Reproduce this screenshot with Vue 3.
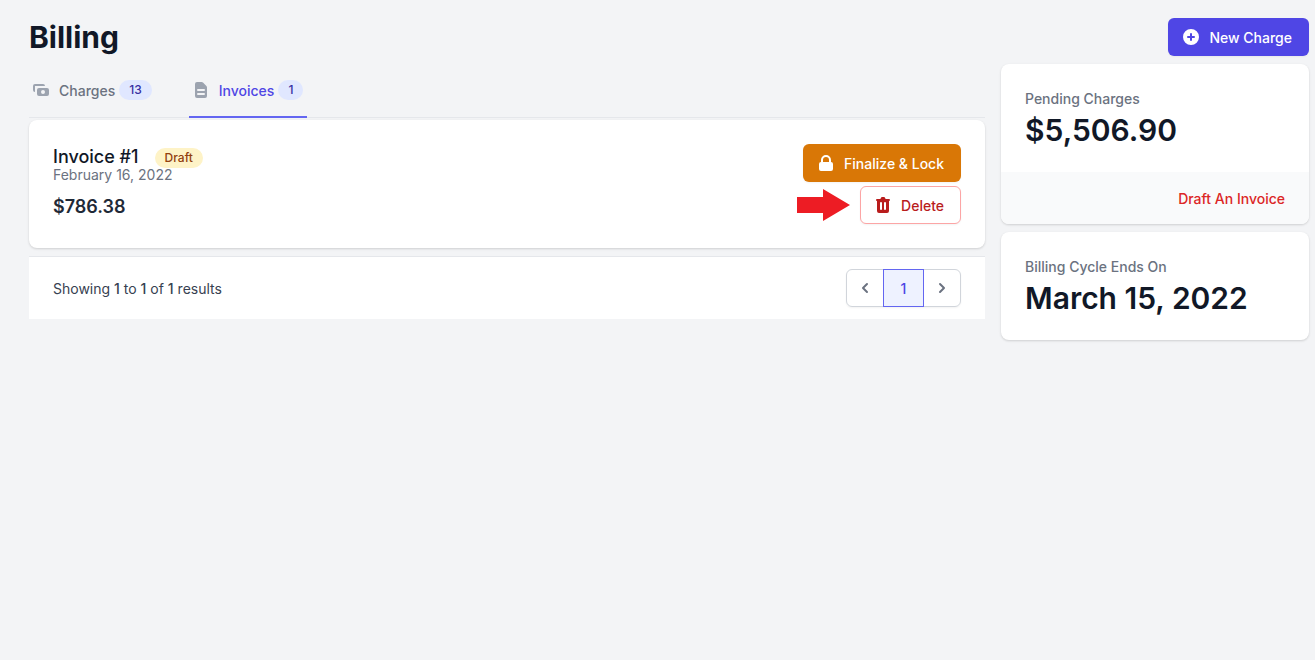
<script setup>
const tabs = [
  {
    name: 'Charges',
    count: 13,
    active: false,
    icon: 'M4 4a2 2 0 00-2 2v4a2 2 0 002 2V6h10a2 2 0 00-2-2H4zm2 6a2 2 0 012-2h8a2 2 0 012 2v4a2 2 0 01-2 2H8a2 2 0 01-2-2v-4zm6 4a2 2 0 100-4 2 2 0 000 4z',
  },
  {
    name: 'Invoices',
    count: 1,
    active: true,
    icon: 'M4 4a2 2 0 012-2h4.586A2 2 0 0112 2.586L15.414 6A2 2 0 0116 7.414V16a2 2 0 01-2 2H6a2 2 0 01-2-2V4zm2 6a1 1 0 011-1h6a1 1 0 110 2H7a1 1 0 01-1-1zm1 3a1 1 0 100 2h6a1 1 0 100-2H7z',
  },
]
</script>

<template>
  <div class="page">
    <main class="main">
      <h1 class="heading">Billing</h1>
      <nav class="tabs" aria-label="Billing sections">
        <a
          v-for="tab in tabs"
          :key="tab.name"
          href="#"
          class="tab"
          :class="{ active: tab.active }"
          :aria-current="tab.active ? 'page' : undefined"
        >
          <svg class="icon" viewBox="0 0 20 20" aria-hidden="true">
            <path fill-rule="evenodd" clip-rule="evenodd" :d="tab.icon" />
          </svg>
          <span>{{ tab.name }}</span>
          <span class="badge count">{{ tab.count }}</span>
        </a>
      </nav>

      <article class="card invoice">
        <div class="details">
          <div class="title-row">
            <h2 class="title">Invoice #1</h2>
            <span class="badge draft">Draft</span>
          </div>
          <p class="date">February 16, 2022</p>
          <p class="amount">$786.38</p>
        </div>
        <div class="actions">
          <button type="button" class="btn finalize">
            <svg class="icon" viewBox="0 0 20 20" aria-hidden="true">
              <path fill-rule="evenodd" clip-rule="evenodd" d="M5 9V7a5 5 0 0110 0v2a2 2 0 012 2v5a2 2 0 01-2 2H5a2 2 0 01-2-2v-5a2 2 0 012-2zm8-2v2H7V7a3 3 0 016 0z" />
            </svg>
            Finalize &amp; Lock
          </button>
          <div class="delete-row">
            <svg class="arrow" viewBox="0 0 53 32" aria-hidden="true">
              <path d="M0 8h26V0l27 16-27 16v-8H0z" />
            </svg>
            <button type="button" class="btn delete">
              <svg class="icon" viewBox="0 0 20 20" aria-hidden="true">
                <path fill-rule="evenodd" clip-rule="evenodd" d="M9 2a1 1 0 00-.894.553L7.382 4H4a1 1 0 000 2v10a2 2 0 002 2h8a2 2 0 002-2V6a1 1 0 100-2h-3.382l-.724-1.447A1 1 0 0011 2H9zM7 8a1 1 0 012 0v6a1 1 0 11-2 0V8zm5-1a1 1 0 00-1 1v6a1 1 0 102 0V8a1 1 0 00-1-1z" />
              </svg>
              Delete
            </button>
          </div>
        </div>
      </article>

      <div class="pagination">
        <p class="results">Showing <b>1</b> to <b>1</b> of <b>1</b> results</p>
        <nav class="pager" aria-label="Pagination">
          <button type="button" class="page-btn" aria-label="Previous">
            <svg class="icon" viewBox="0 0 20 20" aria-hidden="true">
              <path fill-rule="evenodd" clip-rule="evenodd" d="M12.707 5.293a1 1 0 010 1.414L9.414 10l3.293 3.293a1 1 0 01-1.414 1.414l-4-4a1 1 0 010-1.414l4-4a1 1 0 011.414 0z" />
            </svg>
          </button>
          <button type="button" class="page-btn current" aria-current="page">1</button>
          <button type="button" class="page-btn" aria-label="Next">
            <svg class="icon" viewBox="0 0 20 20" aria-hidden="true">
              <path fill-rule="evenodd" clip-rule="evenodd" d="M7.293 14.707a1 1 0 010-1.414L10.586 10 7.293 6.707a1 1 0 011.414-1.414l4 4a1 1 0 010 1.414l-4 4a1 1 0 01-1.414 0z" />
            </svg>
          </button>
        </nav>
      </div>
    </main>

    <aside class="side">
      <button type="button" class="btn new-charge">
        <svg class="icon" viewBox="0 0 20 20" aria-hidden="true">
          <path fill-rule="evenodd" clip-rule="evenodd" d="M10 18a8 8 0 100-16 8 8 0 000 16zm1-11a1 1 0 10-2 0v2H7a1 1 0 100 2h2v2a1 1 0 102 0v-2h2a1 1 0 100-2h-2V7z" />
        </svg>
        New Charge
      </button>
      <section class="card stat">
        <div class="stat-body">
          <h2 class="stat-label">Pending Charges</h2>
          <p class="stat-value">$5,506.90</p>
        </div>
        <div class="stat-footer"><a href="#">Draft An Invoice</a></div>
      </section>
      <section class="card stat">
        <div class="stat-body">
          <h2 class="stat-label">Billing Cycle Ends On</h2>
          <p class="stat-value">March 15, 2022</p>
        </div>
      </section>
    </aside>
  </div>
</template>

<style>
body {
  background: #f3f4f6;
}
</style>

<style scoped>
.page,
.page * {
  box-sizing: border-box;
}

.page {
  display: grid;
  grid-template-columns: repeat(4, minmax(0, 1fr));
  gap: 16px;
  align-items: start;
  padding: 18px 6px 24px 29px;
  font-family: Inter, "Liberation Sans", sans-serif;
  font-size: 14px;
  line-height: 21px;
  color: #111827;
}

h1,
h2,
p {
  margin: 0;
}

a {
  text-decoration: none;
}

button {
  font: inherit;
  cursor: pointer;
}

.main {
  grid-column: span 3;
}

.heading {
  font-size: 30px;
  line-height: 38px;
  font-weight: 700;
}

.icon {
  flex: none;
  width: 20px;
  height: 20px;
  fill: currentColor;
}

.tabs {
  display: flex;
  gap: 33px;
  margin-top: 8px;
  box-shadow: inset 0 -1px #e5e7eb;
}

.tab {
  display: flex;
  align-items: flex-start;
  padding: 16px 4px 15px;
  border-bottom: 2px solid transparent;
  font-weight: 500;
  color: #6b7280;
}

.tab .icon {
  margin: 0 8px 0 -2px;
  color: #9ca3af;
}

.tab.active {
  border-color: #6366f1;
  color: #4f46e5;
}

.badge {
  padding: 2px 10px;
  border-radius: 10px;
  font-size: 12px;
  line-height: 16px;
  font-weight: 500;
}

.count {
  margin-left: 4px;
  background: #e0e7ff;
  color: #3730a3;
}

.draft {
  margin-top: 4px;
  background: #fef3c7;
  color: #92400e;
}

.card {
  overflow: hidden;
  border-radius: 8px;
  background: #fff;
  box-shadow: 0 1px 3px rgba(0, 0, 0, 0.1), 0 1px 2px rgba(0, 0, 0, 0.06);
}

.invoice {
  display: flex;
  justify-content: space-between;
  margin-top: 2px;
  padding: 24px;
}

.title-row {
  display: flex;
  align-items: flex-start;
  gap: 16px;
}

.title {
  font-size: 18px;
  line-height: 25px;
  font-weight: 500;
}

.date {
  line-height: 12px;
  color: #6b7280;
}

.amount {
  margin-top: 14px;
  font-size: 18px;
  line-height: 24px;
  font-weight: 600;
  color: #1f2937;
}

.actions {
  display: flex;
  flex-direction: column;
  align-items: flex-end;
  gap: 4px;
}

.btn {
  display: inline-flex;
  align-items: flex-start;
  gap: 8px;
  padding: 8px 16px 7px 12px;
  border: 1px solid transparent;
  border-radius: 6px;
  font-weight: 500;
  color: #fff;
  box-shadow: 0 1px 2px rgba(0, 0, 0, 0.05);
}

.finalize {
  background: #d97706;
}

.delete {
  border-color: #fca5a5;
  background: #fff;
  color: #b91c1c;
}

.delete-row {
  display: flex;
  align-items: center;
  gap: 10px;
}

.arrow {
  width: 53px;
  height: 32px;
  fill: #ed1c24;
}

.pagination {
  display: flex;
  align-items: flex-start;
  justify-content: space-between;
  margin-top: 8px;
  padding: 12px 24px;
  border-top: 1px solid #e5e7eb;
  background: #fff;
}

.results {
  padding-top: 9px;
  color: #374151;
}

.results b {
  font-weight: 500;
}

.pager {
  display: flex;
  border-radius: 6px;
  box-shadow: 0 1px 2px rgba(0, 0, 0, 0.05);
}

.page-btn {
  display: flex;
  align-items: flex-start;
  justify-content: center;
  padding: 8px;
  border: 1px solid #d1d5db;
  background: #fff;
  font-weight: 500;
  color: #6b7280;
}

.page-btn:first-child {
  border-radius: 6px 0 0 6px;
}

.page-btn:last-child {
  border-radius: 0 6px 6px 0;
}

.page-btn.current {
  z-index: 1;
  min-width: 41px;
  margin: 0 -1px;
  padding: 8px 12px 7px;
  border-color: #6366f1;
  background: #eef2ff;
  color: #4f46e5;
}

.side {
  display: flex;
  flex-direction: column;
  gap: 8px;
}

.new-charge {
  align-self: flex-end;
  background: #4f46e5;
}

.stat-body {
  padding: 24px;
}

.stat-label {
  font-size: 14px;
  font-weight: 500;
  color: #6b7280;
}

.stat-value {
  margin-top: 3px;
  font-size: 30px;
  line-height: 36px;
  font-weight: 600;
}

.stat-footer {
  padding: 16px 24px 15px;
  background: #f9fafb;
  text-align: right;
  font-weight: 500;
}

.stat-footer a {
  color: #dc2626;
}
</style>
